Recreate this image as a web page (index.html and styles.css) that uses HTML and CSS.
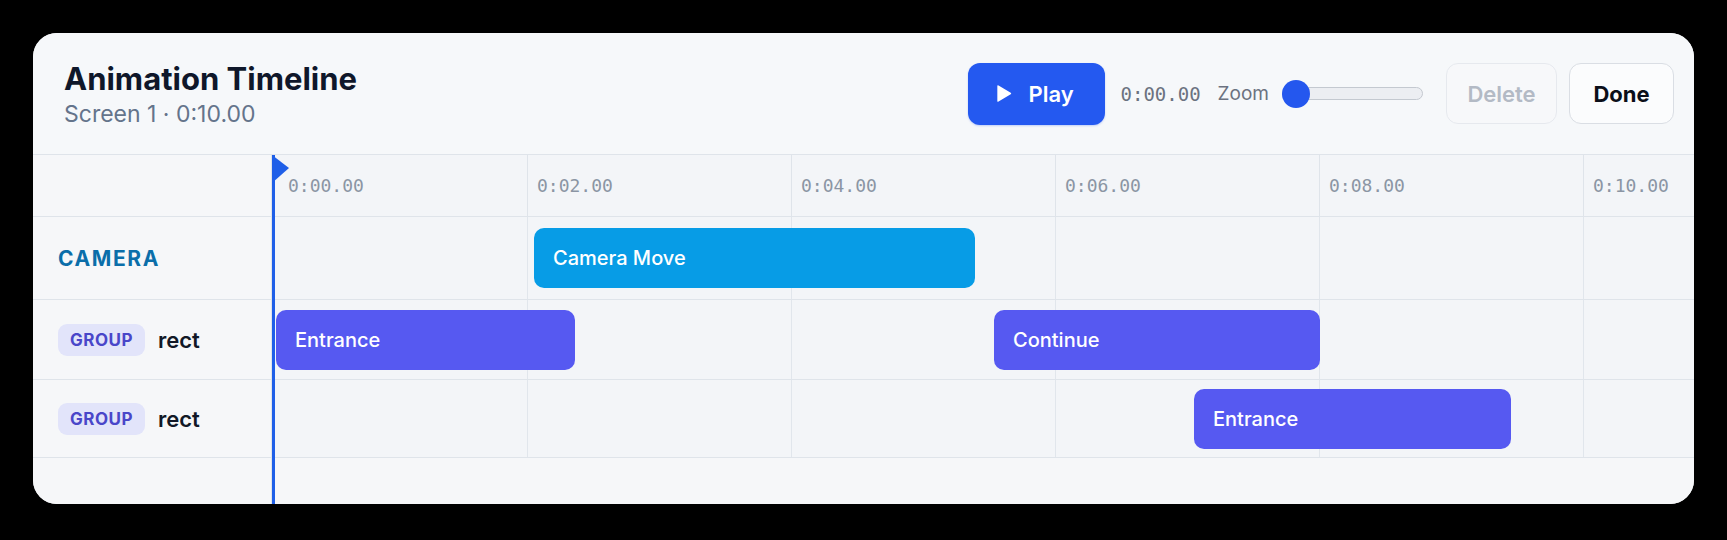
FILE: index.html
```html
<!DOCTYPE html>
<html lang="en">
<head>
<meta charset="utf-8">
<title>Animation Timeline</title>
<link rel="stylesheet" href="styles.css">
</head>
<body>
<div class="page">
  <div class="card">
    <header class="topbar">
      <div class="titles">
        <h1 class="title">Animation Timeline</h1>
        <div class="subtitle">Screen 1 · 0:10.00</div>
      </div>
      <div class="controls">
        <button class="play-btn" type="button">
          <svg class="play-icon" viewBox="0 0 20 20" width="19" height="19" aria-hidden="true"><path d="M3.5 2.2 Q3.5 0.8 4.8 1.6 L17.6 9.1 Q18.8 10 17.6 10.9 L4.8 18.4 Q3.5 19.2 3.5 17.8 Z" fill="#ffffff"/></svg>
          <span>Play</span>
        </button>
        <span class="time-readout">0:00.00</span>
        <span class="zoom-label">Zoom</span>
        <div class="slider">
          <div class="slider-track"></div>
          <div class="slider-thumb"></div>
        </div>
        <button class="btn btn-delete" type="button" disabled>Delete</button>
        <button class="btn btn-done" type="button">Done</button>
      </div>
    </header>

    <div class="timeline">
      <div class="row ruler-row">
        <div class="label-cell"></div>
        <div class="ruler">
          <div class="tick tick-first"><span>0:00.00</span></div>
          <div class="tick"><span>0:02.00</span></div>
          <div class="tick"><span>0:04.00</span></div>
          <div class="tick"><span>0:06.00</span></div>
          <div class="tick"><span>0:08.00</span></div>
          <div class="tick tick-last"><span>0:10.00</span></div>
        </div>
      </div>

      <div class="row camera-row">
        <div class="label-cell"><span class="camera-label">CAMERA</span></div>
        <div class="track">
          <div class="clip clip-camera" style="left:262px;width:441px">Camera Move</div>
        </div>
      </div>

      <div class="row group-row group-row-1">
        <div class="label-cell"><span class="pill">GROUP</span><span class="layer-name">rect</span></div>
        <div class="track">
          <div class="clip clip-layer" style="left:4px;width:299px">Entrance</div>
          <div class="clip clip-layer" style="left:722px;width:326px">Continue</div>
        </div>
      </div>

      <div class="row group-row group-row-2">
        <div class="label-cell"><span class="pill">GROUP</span><span class="layer-name">rect</span></div>
        <div class="track">
          <div class="clip clip-layer" style="left:922px;width:317px">Entrance</div>
        </div>
      </div>

      <div class="row footer-row">
        <div class="label-cell"></div>
        <div class="footer-space"></div>
      </div>

      <div class="playhead">
        <svg class="playhead-flag" viewBox="0 0 18 28" width="18" height="28" aria-hidden="true"><path d="M0 0 L17 13 L0 28 Z" fill="#1f5fe8"/></svg>
      </div>
    </div>
  </div>
</div>
</body>
</html>
```

FILE: styles.css
```css
* { box-sizing: border-box; }

html, body {
  margin: 0;
  padding: 0;
}

body {
  background: #000000;
  width: 1727px;
  height: 540px;
  overflow: hidden;
  font-family: Inter, "Noto Sans", "Liberation Sans", sans-serif;
  color: #0f172a;
}

.page {
  padding: 33px 0 0 33px;
}

.card {
  width: 1661px;
  height: 471px;
  background: #f6f7f9;
  border-radius: 24px;
  overflow: hidden;
  display: flex;
  flex-direction: column;
}

/* ---------- header ---------- */
.topbar {
  height: 122px;
  flex: 0 0 122px;
  display: flex;
  align-items: center;
  justify-content: space-between;
  padding: 0 20px 0 31px;
  border-bottom: 1px solid #dfe4ea;
  background: #f6f8fa;
}

.titles {
  display: flex;
  flex-direction: column;
  margin-top: 1px;
}

.title {
  margin: 0;
  font-size: 31px;
  line-height: 36px;
  font-weight: 700;
  color: #0f172a;
}

.subtitle {
  margin-top: 4px;
  font-size: 23px;
  line-height: 27px;
  color: #64748b;
}

.controls {
  display: flex;
  align-items: center;
}

.play-btn {
  width: 137px;
  height: 62px;
  border: none;
  border-radius: 12px;
  background: #2459f0;
  color: #ffffff;
  display: flex;
  align-items: center;
  padding: 0 0 0 26px;
  font-family: inherit;
  font-size: 22px;
  font-weight: 600;
  gap: 16px;
  box-shadow: 0 1px 2px rgba(37, 89, 240, 0.25);
}

.play-icon {
  display: block;
  flex: 0 0 auto;
}

.time-readout {
  margin-left: 16px;
  font-family: "DejaVu Sans Mono", "Liberation Mono", monospace;
  font-size: 19px;
  color: #6b7280;
}

.zoom-label {
  margin-left: 17px;
  font-size: 19px;
  color: #6b7280;
}

.slider {
  position: relative;
  margin-left: 13px;
  width: 141px;
  height: 28px;
  display: flex;
  align-items: center;
}

.slider-track {
  width: 100%;
  height: 13px;
  border-radius: 7px;
  background: #eceef2;
  border: 1.5px solid #c4c9d0;
}

.slider-thumb {
  position: absolute;
  left: 0;
  top: 0;
  width: 28px;
  height: 28px;
  border-radius: 50%;
  background: #2457ee;
}

.btn {
  height: 61px;
  border-radius: 12px;
  font-family: inherit;
  font-size: 22px;
  background: #fbfcfd;
  padding: 0;
}

.btn-delete {
  margin-left: 23px;
  width: 111px;
  border: 1.5px solid #e6e9ee;
  color: #b3bac5;
  font-weight: 600;
  background: #f7f8fa;
}

.btn-done {
  margin-left: 12px;
  width: 105px;
  border: 1.5px solid #dadee4;
  color: #0b0f19;
  font-weight: 700;
}

/* ---------- timeline ---------- */
.timeline {
  position: relative;
  flex: 1 1 auto;
  display: flex;
  flex-direction: column;
}

.row {
  display: flex;
  border-bottom: 1px solid #dfe4ea;
}

.label-cell {
  width: 239px;
  flex: 0 0 239px;
  display: flex;
  align-items: center;
  padding-left: 25px;
  border-right: 1px solid #dfe4ea;
  background: #f6f7f9;
}

.ruler-row { height: 62px; }
.camera-row { height: 83px; }
.group-row-1 { height: 80px; }
.group-row-2 { height: 78px; }

.footer-row {
  flex: 1 1 auto;
  border-bottom: none;
}

.footer-space {
  flex: 1 1 auto;
  background: #f6f7f9;
}

.ruler {
  flex: 1 1 auto;
  display: flex;
  background: #f3f5f8;
}

.tick {
  width: 264px;
  flex: 0 0 264px;
  display: flex;
  align-items: center;
  padding-left: 9px;
  border-left: 1px solid #dfe4ea;
  font-family: "DejaVu Sans Mono", "Liberation Mono", monospace;
  font-size: 18px;
  color: #8b95a4;
}

.tick-first {
  width: 255px;
  flex: 0 0 255px;
  border-left: none;
  padding-left: 16px;
}

.tick-last {
  flex: 1 1 auto;
  width: auto;
}

.track {
  position: relative;
  flex: 1 1 auto;
  background-color: #f3f5f8;
  background-image: linear-gradient(to right, #e1e6ec 1px, transparent 1px);
  background-size: 264px 100%;
  background-position: 255px 0;
  background-repeat: repeat-x;
}

.clip {
  position: absolute;
  top: calc(50% - 30px);
  height: 60px;
  border-radius: 10px;
  display: flex;
  align-items: center;
  padding-left: 19px;
  color: #ffffff;
  font-size: 20px;
  font-weight: 500;
}

.clip-camera { background: #079ce6; }
.clip-layer { background: #5659f1; }

.camera-label {
  font-size: 21px;
  font-weight: 700;
  letter-spacing: 0.075em;
  color: #0b6ea9;
}

.pill {
  display: inline-flex;
  align-items: center;
  height: 32px;
  padding: 0 12px;
  border-radius: 9px;
  background: #e2e4fa;
  color: #4946c9;
  font-size: 17px;
  font-weight: 700;
  letter-spacing: 0.03em;
}

.layer-name {
  margin-left: 13px;
  font-size: 22px;
  font-weight: 600;
  color: #111827;
}

/* ---------- playhead ---------- */
.playhead {
  position: absolute;
  left: 239px;
  top: 0;
  bottom: 0;
  width: 3px;
  background: #1f5fe8;
}

.playhead-flag {
  position: absolute;
  left: 0;
  top: 0;
  display: block;
}
```
